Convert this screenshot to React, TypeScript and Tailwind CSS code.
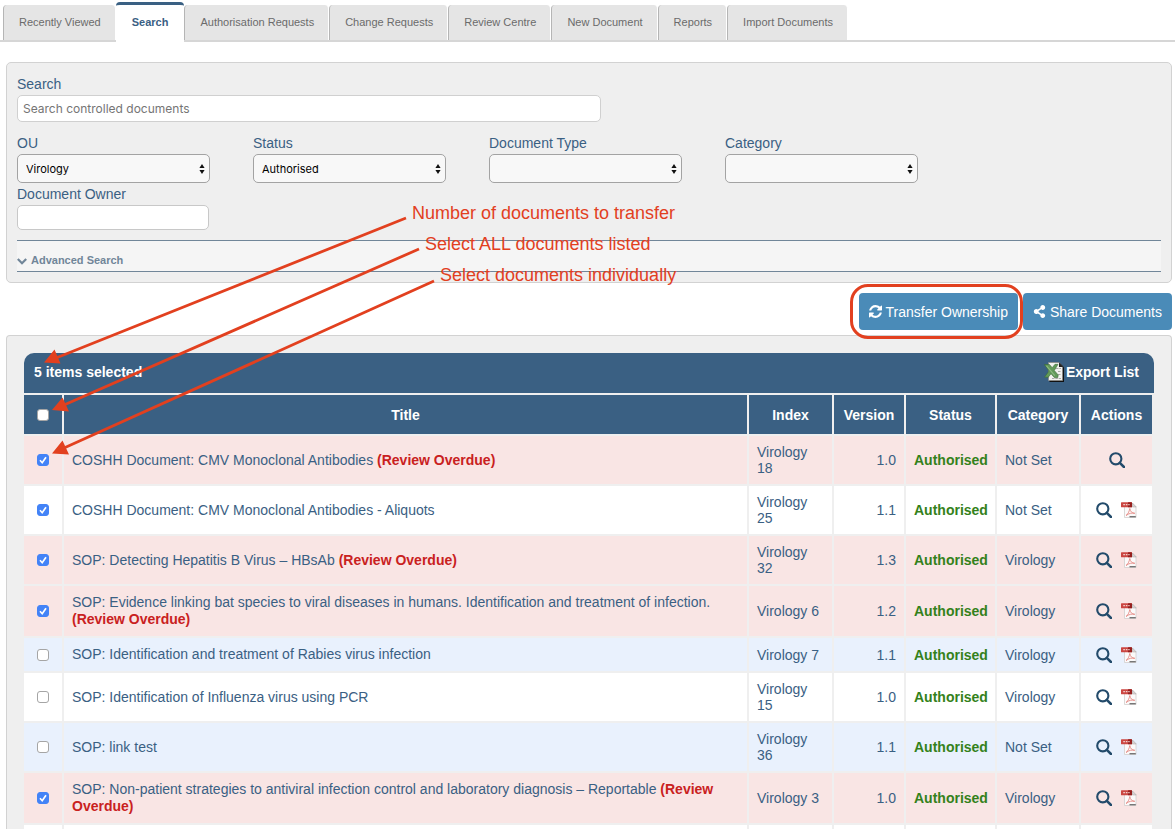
import { useState } from "react";
import { FaShareAlt } from "react-icons/fa";

type Doc = {
  title: string;
  overdue?: boolean;
  index: string;
  version: string;
  category: string;
  pdf?: boolean;
  tone: "pink" | "white" | "blue";
};

const tabs = [
  "Recently Viewed",
  "Search",
  "Authorisation Requests",
  "Change Requests",
  "Review Centre",
  "New Document",
  "Reports",
  "Import Documents",
];

const docs: Doc[] = [
  { title: "COSHH Document: CMV Monoclonal Antibodies", overdue: true, index: "Virology 18", version: "1.0", category: "Not Set", tone: "pink" },
  { title: "COSHH Document: CMV Monoclonal Antibodies - Aliquots", index: "Virology 25", version: "1.1", category: "Not Set", pdf: true, tone: "white" },
  { title: "SOP: Detecting Hepatitis B Virus – HBsAb", overdue: true, index: "Virology 32", version: "1.3", category: "Virology", pdf: true, tone: "pink" },
  { title: "SOP: Evidence linking bat species to viral diseases in humans. Identification and treatment of infection.", overdue: true, index: "Virology 6", version: "1.2", category: "Virology", pdf: true, tone: "pink" },
  { title: "SOP: Identification and treatment of Rabies virus infection", index: "Virology 7", version: "1.1", category: "Virology", pdf: true, tone: "blue" },
  { title: "SOP: Identification of Influenza virus using PCR", index: "Virology 15", version: "1.0", category: "Virology", pdf: true, tone: "white" },
  { title: "SOP: link test", index: "Virology 36", version: "1.1", category: "Not Set", pdf: true, tone: "blue" },
  { title: "SOP: Non-patient strategies to antiviral infection control and laboratory diagnosis – Reportable", overdue: true, index: "Virology 3", version: "1.0", category: "Virology", pdf: true, tone: "pink" },
];

const tones = {
  pink: "bg-[#f9e5e4]",
  white: "bg-white",
  blue: "bg-[#e9f1fd]",
};

function RefreshIcon() {
  return (
    <svg viewBox="0 128 1536 1536" className="size-[13px]" fill="currentColor" aria-hidden="true">
      <path d="M1511 1056q0 5-1 7-64 268-268 434.5t-478 166.5q-146 0-282.5-55t-243.5-157l-129 129q-19 19-45 19t-45-19-19-45v-448q0-26 19-45t45-19h448q26 0 45 19t19 45-19 45l-137 137q71 66 161 102t187 36q134 0 250-65t186-179q11-17 53-117 8-23 30-23h192q13 0 22.5 9.5t9.5 22.5zm25-800v448q0 26-19 45t-45 19h-448q-26 0-45-19t-19-45 19-45l138-138q-148-137-349-137-134 0-250 65t-186 179q-11 17-53 117-8 23-30 23h-199q-13 0-22.5-9.5t-9.5-22.5v-7q65-268 270-434.5t480-166.5q146 0 284 55.5t245 156.5l130-129q19-19 45-19t45 19 19 45z" />
    </svg>
  );
}

function ChevronIcon() {
  return (
    <svg viewBox="0 0 10 10" className="size-2.5" fill="none" stroke="currentColor" strokeWidth="2.200" aria-hidden="true">
      <path d="M.8 3L5 7.200 9.200 3" />
    </svg>
  );
}

function MagnifierIcon() {
  return (
    <svg viewBox="0 0 16 16" className="size-4" fill="none" stroke="#234b6b" aria-hidden="true">
      <circle cx="6.8" cy="6.8" r="5.6" strokeWidth="2.1" />
      <path d="M10.8 10.8L15 15" strokeWidth="2.5" strokeLinecap="round" />
    </svg>
  );
}

function PdfIcon() {
  return (
    <svg viewBox="0 0 16 16" className="size-4" aria-hidden="true">
      <path d="M3.500 1.500h8l3.500 3.500v10.500H3.500z" fill="#fbfafa" stroke="#d2cecd" strokeWidth=".8" />
      <path d="M11.500 1l3.800 4h-3.800z" fill="#d8d5d4" stroke="#a8a3a2" strokeWidth=".5" />
      <path d="M5 13.500c1.800-1.200 3.200-3.700 3.800-7 .6 3.200 2.200 4.700 5 4.800-3.200-.6-5.800 0-8.800 2.200z" fill="none" stroke="#e58a84" strokeWidth=".9" />
      <path d="M8.500 14.700h6.300" stroke="#777" strokeWidth="1.400" />
      <rect x="0" y=".3" width="11" height="4.900" rx=".5" fill="#cb4642" />
      <rect x="7" y=".3" width="4" height="4.900" rx=".5" fill="#96201e" />
      <path d="M2.300 2.600h1.600M4.800 2.600h1.600M7.300 2.600h1.300" stroke="#f3d4d2" strokeWidth="1.300" />
    </svg>
  );
}

function ExcelIcon() {
  return (
    <svg viewBox="0 0 20 20" className="size-5" aria-hidden="true">
      <path d="M5.500 1.500h11l3.500 4V20H5.500z" fill="#111" />
      <path d="M4.500 .5h10.500l3.500 4v14h-14z" fill="#f2f2ef" stroke="#8a8a86" strokeWidth=".8" />
      <path d="M15 .5v4.500h4.500z" fill="#222" />
      <path d="M12 6.500h5M14 9.500h3M14 12.500h3M8 16.500h9" stroke="#a9a9a5" strokeWidth="1.100" strokeDasharray="2.500 .8" />
      <path d="M.3 2.500h5.200l2.700 3.200 2.800-3.400h3L10.300 8.500l3.900 4.500-.4 2.500h-3.500L7 11.700 4.300 15.200H.5L5 9z" fill="#629a59" stroke="#3c6b38" strokeWidth=".6" />
      <path d="M2.500 3.800l8.300 9.900" stroke="#8dba82" strokeWidth="1.100" />
    </svg>
  );
}

function Tick({ label, checked, onChange }: { label: string; checked: boolean; onChange: () => void }) {
  return (
    <div className="mx-auto grid size-3 place-items-center">
      <input
        type="checkbox"
        aria-label={label}
        checked={checked}
        onChange={onChange}
        className="col-start-1 row-start-1 size-3 appearance-none rounded-[3px] border border-[#a5a5a5] bg-white checked:border-[#4383f7] checked:bg-[#4383f7]"
      />
      {checked && (
        <svg viewBox="0 0 12 12" className="pointer-events-none col-start-1 row-start-1 size-3" fill="none" stroke="#fff" strokeWidth="1.700" aria-hidden="true">
          <path d="M3 6.300l2.200 2.400L9 3.200" />
        </svg>
      )}
    </div>
  );
}

function SelectField({ id, label, options }: { id: string; label: string; options: string[] }) {
  return (
    <div className="w-[236px]">
      <label htmlFor={id} className="block leading-5">{label}</label>
      <div className="mt-px grid w-[193px] items-center">
        <select
          id={id}
          className="col-start-1 row-start-1 h-[29px] w-full appearance-none rounded-[5px] border border-[#a3a3a3] bg-[#f8f8f8] px-2 pt-0.5 font-[Inter,sans-serif] text-[11px] text-black"
        >
          {options.map((o) => (
            <option key={o}>{o}</option>
          ))}
        </select>
        <svg viewBox="0 0 6 10" className="pointer-events-none col-start-1 row-start-1 mr-[5px] h-2.5 w-1.5 justify-self-end" aria-hidden="true">
          <path d="M3 0l2.600 4H.4zM3 10L.4 6h5.200z" fill="#111" />
        </svg>
      </div>
    </div>
  );
}

function Annotations() {
  return (
    <div className="pointer-events-none absolute top-0 left-0 text-lg leading-6 whitespace-nowrap text-[#e2401f]">
      <svg width="700" height="480" viewBox="0 0 700 480" className="block" stroke="#e2401f" strokeWidth="2.800" fill="#e2401f" aria-hidden="true">
        <path d="M406 218L56 358M419 249L64 405M434 281L64 448" />
        <path stroke="none" d="M44 362.500L54.500 349.500L60.500 363.500zM52 410L62.500 397.500L69 411.500zM52 453.500L62.500 440.500L69 454.500z" />
      </svg>
      <span className="absolute top-[201px] left-[412px]">Number of documents to transfer</span>
      <span className="absolute top-[232px] left-[425px]">Select ALL documents listed</span>
      <span className="absolute top-[263px] left-[440px]">Select documents individually</span>
    </div>
  );
}

export default function App() {
  const [selected, setSelected] = useState<number[]>([0, 1, 2, 3, 7]);
  const allSelected = selected.length === docs.length;
  const toggle = (i: number) =>
    setSelected((s) => (s.includes(i) ? s.filter((n) => n !== i) : [...s, i]));

  return (
    <div className="relative flex h-screen flex-col overflow-hidden bg-white font-['Liberation_Sans',Arial,sans-serif] text-sm text-[#3a6083]">
      <nav className="flex shrink-0 items-end border-b-2 border-[#d6d6d6] pt-0.5 pl-[3px] text-[11px]">
        {tabs.map((t) =>
          t === "Search" ? (
            <a key={t} href="#" aria-current="page" className="-mb-0.5 flex h-10 items-center rounded-t-[4px] border-t-3 border-[#3a6083] bg-white px-4 pb-0.5 font-bold">
              {t}
            </a>
          ) : (
            <a key={t} href="#" className="flex h-[35px] items-center rounded-t-[4px] border-r border-l border-r-white border-l-[#b5b5b5] bg-[#e5e5e5] pr-3.5 pl-[15px] text-[#6b6b6b]">
              {t}
            </a>
          ),
        )}
      </nav>

      <form className="mt-5 mr-[3px] ml-1.5 shrink-0 rounded-[5px] border border-[#d2d2d2] bg-[#efefef] px-2.5 pt-[11px] pb-2.5">
        <label htmlFor="q" className="block leading-5">Search</label>
        <input
          id="q"
          placeholder="Search controlled documents"
          className="mt-px block h-[27px] w-[584px] rounded-[5px] border border-[#d0d0d0] bg-white px-[5px] font-[Inter,sans-serif] text-xs placeholder:text-[#757575]"
        />
        <div className="mt-[11px] flex flex-wrap">
          <SelectField id="ou" label="OU" options={["Virology"]} />
          <SelectField id="status" label="Status" options={["Authorised"]} />
          <SelectField id="type" label="Document Type" options={[""]} />
          <SelectField id="category" label="Category" options={[""]} />
          <div className="mt-px w-[236px]">
            <label htmlFor="owner" className="block leading-5">Document Owner</label>
            <input id="owner" className="mt-px block h-[25px] w-48 rounded-[5px] border border-[#c8c8c8] bg-white px-[5px]" />
          </div>
        </div>
        <button
          type="button"
          className="mt-2.5 flex h-8 w-full items-center gap-1 border-y border-[#718699] bg-[#f5f5f5] pt-2.5 text-[11px] font-bold text-[#718699]"
        >
          <ChevronIcon />
          Advanced Search
        </button>
      </form>

      <div className="mt-2.5 mr-[3px] flex shrink-0 justify-end gap-[5px]">
        <div className="relative">
          <button type="button" className="flex h-[37px] items-center gap-1 rounded-[4px] bg-[#4a8bb8] px-2.5 text-white">
            <RefreshIcon />
            Transfer Ownership
          </button>
          <span className="pointer-events-none absolute -inset-y-[9px] -right-[5px] -left-[9px] rounded-[18px] border-3 border-[#e2401f]" />
        </div>
        <button type="button" className="flex h-[37px] items-center gap-1 rounded-[4px] bg-[#4a8bb8] px-2.5 text-white">
          <FaShareAlt className="size-[13px]" />
          Share Documents
        </button>
      </div>

      <section className="mt-[5px] mr-[3px] ml-1.5 min-h-0 flex-1 rounded-t-[4px] border border-b-0 border-[#d2d2d2] bg-[#efefef] px-[17px] pt-[17px]">
        <div className="flex h-10 items-center justify-between rounded-t-[10px] bg-[#3a6083] pr-[15px] pb-0.5 pl-2.5 font-bold text-white">
          <span>{selected.length} items selected</span>
          <a href="#" className="flex items-center gap-0.5">
            <ExcelIcon />
            Export List
          </a>
        </div>
        <table className="-ml-0.5 w-[calc(100%+2px)] table-fixed border-separate border-spacing-0.5 leading-4">
          <thead>
            <tr className="h-[39px] text-white *:bg-[#3a6083]">
              <th className="w-[38px]">
                <Tick
                  label="Select all documents"
                  checked={allSelected}
                  onChange={() => setSelected(allSelected ? [] : docs.map((_, i) => i))}
                />
              </th>
              <th>Title</th>
              <th className="w-[83px]">Index</th>
              <th className="w-[70px]">Version</th>
              <th className="w-[89px]">Status</th>
              <th className="w-[82px]">Category</th>
              <th className="w-[71px]">Actions</th>
            </tr>
          </thead>
          <tbody>
            {docs.map((d, i) => (
              <tr key={d.title} className={tones[d.tone]}>
                <td>
                  <Tick label={"Select " + d.title} checked={selected.includes(i)} onChange={() => toggle(i)} />
                </td>
                <td className="px-2 py-2 leading-[17px]">
                  {d.title}
                  {d.overdue && <b className="text-[#c9211e]"> (Review Overdue)</b>}
                </td>
                <td className="px-2 py-2">{d.index}</td>
                <td className="px-2 py-2 text-right">{d.version}</td>
                <td className="px-2 py-2 font-bold text-[#34811a]">Authorised</td>
                <td className="px-2 py-2">{d.category}</td>
                <td className="py-2">
                  <div className="flex justify-center gap-[9px]">
                    <a href="#" aria-label="View document"><MagnifierIcon /></a>
                    {d.pdf && <a href="#" aria-label="Download PDF"><PdfIcon /></a>}
                  </div>
                </td>
              </tr>
            ))}
            <tr className="h-12 bg-white">
              <td /><td /><td /><td /><td /><td /><td />
            </tr>
          </tbody>
        </table>
      </section>

      <Annotations />
    </div>
  );
}
